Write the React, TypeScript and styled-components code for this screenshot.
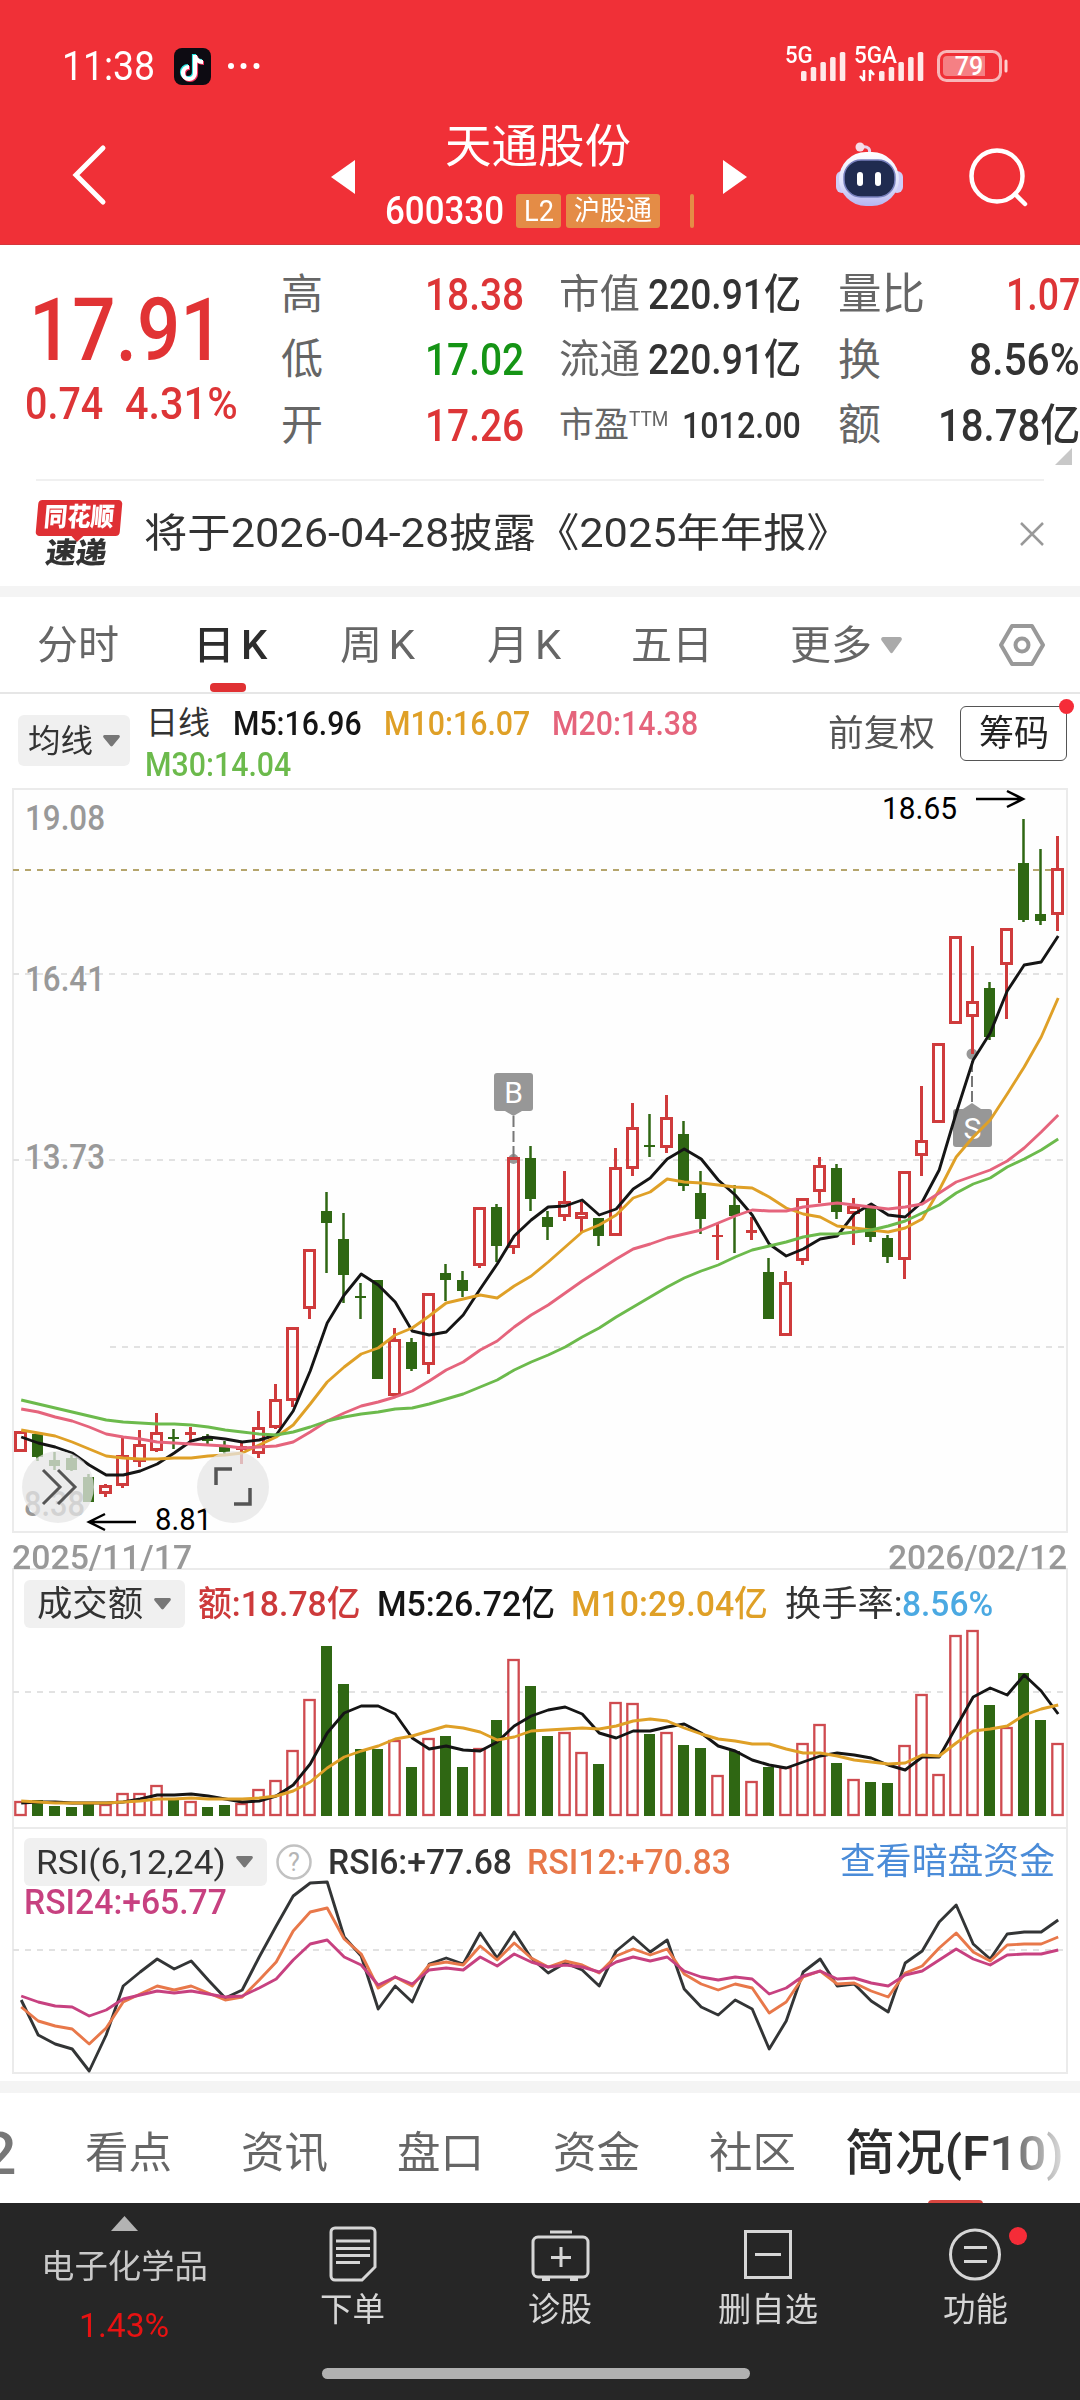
import React, { useLayoutEffect, useRef, useState } from 'react';
import styled, { createGlobalStyle } from 'styled-components';

const GlobalStyle = createGlobalStyle`
  * { box-sizing: border-box; }
  body { margin: 0; background: #fff; font-family: Roboto, "Noto Sans CJK SC", sans-serif; }
`;

/* ---------- text that is condensed to a given width ---------- */

const FitBox = styled.span<{ $w: number; $size: number; $gap: number; $color: string; $weight: number; $up: number }>`
  display: block;
  flex: none;
  width: ${p => p.$w}px;
  height: ${p => p.$size}px;
  margin-left: ${p => p.$gap}px;
  margin-bottom: ${p => p.$up}px;
  font-size: ${p => p.$size}px;
  line-height: ${p => p.$size}px;
  font-weight: ${p => p.$weight};
  color: ${p => p.$color};
  white-space: nowrap;
`;
const FitInner = styled.span`
  display: inline-block;
  transform-origin: 0 50%;
`;

type FitProps = { w: number; size: number; gap?: number; color?: string; weight?: number; up?: number; children: React.ReactNode };
function Fit({ w, size, gap = 0, color = '#333', weight = 400, up = 0, children }: FitProps) {
  const ref = useRef<HTMLSpanElement>(null);
  const [scale, setScale] = useState(1);
  useLayoutEffect(() => {
    if (ref.current) setScale(w / ref.current.offsetWidth);
  }, [w]);
  return (
    <FitBox $w={w} $size={size} $gap={gap} $color={color} $weight={weight} $up={up}>
      <FitInner ref={ref} style={{ transform: `scaleX(${scale})` }}>{children}</FitInner>
    </FitBox>
  );
}

const Screen = styled.div`
  width: 1080px;
  height: 2400px;
  overflow: hidden;
  background: #fff;
`;
const Icon = styled.svg<{ $gap?: number }>`
  display: block;
  flex: none;
  margin-left: ${p => p.$gap ?? 0}px;
  overflow: visible;
`;
const Divider = styled.div<{ $h: number }>`
  height: ${p => p.$h}px;
  background: #f4f4f4;
`;

/* ---------- header ---------- */

const Header = styled.header`
  height: 245px;
  background: #f03037;
  border-bottom: 1px solid #d6363c;
`;
const StatusBar = styled.div`
  display: flex;
  height: 92px;
  padding: 40px 0 0 63px;
  align-items: center;
`;
const TitleBar = styled.div`
  display: flex;
  height: 152px;
  padding-left: 72px;
  padding-top: 14px;
`;
const TitleIcon = styled.div<{ $top: number; $gap: number }>`
  margin: ${p => p.$top}px 0 0 ${p => p.$gap}px;
`;
const TitleBlock = styled.div`
  width: 310px;
  margin: 17px 0 0 29px;
`;
const CodeRow = styled.div`
  display: flex;
  align-items: center;
  height: 34px;
  margin-top: 25px;
`;
const Badge = styled.span<{ $w: number; $gap: number }>`
  display: flex;
  align-items: center;
  justify-content: center;
  flex: none;
  width: ${p => p.$w}px;
  height: 34px;
  margin-left: ${p => p.$gap}px;
  border-radius: 3px;
  background: #e48c46;
`;

const bars = (x: number) => [10, 14, 19, 24, 29].map((h, i) => (
  <rect key={i} x={x + i * 9.7} y={40 - h} width="5.5" height={h} rx="1.5" />
));

function TopHeader() {
  return (
    <Header>
      <StatusBar>
        <Fit gap={-1} w={93} size={41} color="#fff" weight={400}>11:38</Fit>
        <Icon $gap={19} width="37" height="37" viewBox="0 0 37 37">
          <rect width="37" height="37" rx="8" fill="#0d0b12" />
          <g fill="none" strokeWidth="4.2">
            <path d="M20 6v18a6 6 0 1 1-6-6M20 7c1 4 4 6 8 6" stroke="#25e5e0" />
            <path d="M22 8v18a6 6 0 1 1-6-6M22 9c1 4 4 6 8 6" stroke="#f4315c" />
            <path d="M21 7v18a6 6 0 1 1-6-6M21 8c1 4 4 6 8 6" stroke="#fff" />
          </g>
        </Icon>
        <Icon $gap={17} width="34" height="6" viewBox="0 0 34 6" fill="#fff">
          <circle cx="3" cy="3" r="3" /><circle cx="15.500" cy="3" r="3" /><circle cx="28.500" cy="3" r="3" />
        </Icon>
        <Fit gap={523} w={28} size={23} color="#fff" weight={500} up={21}>5G</Fit>
        <Icon $gap={-12} width="46" height="29" viewBox="0 11 46 29" fill="#ffe9e9">{bars(0)}</Icon>
        <Fit gap={7} w={43} size={23} color="#fff" weight={500} up={21}>5GA</Fit>
        <Icon $gap={-38} width="66" height="29" viewBox="0 11 66 29" fill="#ffe9e9">
          {bars(20)}
          <path d="M5 29v11M5 40l-4-5M11 40V29M11 29l4 5" stroke="#fff" strokeWidth="2.500" />
        </Icon>
        <Icon $gap={12} width="72" height="32" viewBox="0 0 72 32">
          <rect x="1.500" y="1.500" width="62" height="29" rx="8" fill="none" stroke="#f8b6b8" strokeWidth="3" />
          <path d="M10 6h38v20H10a4 4 0 0 1-4-4V10a4 4 0 0 1 4-4z" fill="#f58084" />
          <path d="M69 11v10" stroke="#ffd0d0" strokeWidth="3" strokeLinecap="round" />
          <text x="32" y="24.500" textAnchor="middle" fontSize="25" fill="#fff" fontWeight="500">79</text>
        </Icon>
      </StatusBar>
      <TitleBar>
        <TitleIcon $top={39} $gap={0}>
          <Icon width="34" height="60" viewBox="0 0 34 60"><path d="M31 3L4 30l27 27" fill="none" stroke="#fff" strokeWidth="5" strokeLinecap="round" /></Icon>
        </TitleIcon>
        <TitleIcon $top={54} $gap={225}>
          <Icon width="24" height="34" viewBox="0 0 24 34"><path d="M24 0v34L0 17z" fill="#fff" /></Icon>
        </TitleIcon>
        <TitleBlock>
          <Fit gap={61} w={186} size={46} color="#fff">天通股份</Fit>
          <CodeRow>
            <Fit gap={1} w={119} size={39} color="#fff" weight={500}>600330</Fit>
            <Badge $w={45} $gap={12}><Fit w={30} size={29} color="#fff">L2</Fit></Badge>
            <Badge $w={94} $gap={5}><Fit w={78} size={27} color="#fff">沪股通</Fit></Badge>
            <Badge $w={4} $gap={30} />
          </CodeRow>
        </TitleBlock>
        <TitleIcon $top={54} $gap={29}>
          <Icon width="24" height="34" viewBox="0 0 24 34"><path d="M0 0v34l24-17z" fill="#fff" /></Icon>
        </TitleIcon>
        <TitleIcon $top={36} $gap={88}>
          <Icon width="70" height="66" viewBox="0 0 70 66">
            <defs>
              <linearGradient id="shell" x1="0" y1="0" x2="0" y2="1"><stop offset="0" stopColor="#fff" /><stop offset=".6" stopColor="#dfe0fb" /><stop offset="1" stopColor="#b5b5f0" /></linearGradient>
            </defs>
            <path d="M34 12c2-5-1-8-7-7" fill="none" stroke="#e5d3ee" strokeWidth="3" />
            <circle cx="25" cy="5" r="4.500" fill="#f6dce8" />
            <rect x="1" y="29" width="12" height="22" rx="6" fill="#cfcdf7" /><rect x="56" y="29" width="12" height="22" rx="6" fill="#cfcdf7" />
            <rect x="4" y="10" width="60" height="54" rx="27" fill="url(#shell)" />
            <rect x="9" y="18" width="51" height="37" rx="17" fill="#202b50" stroke="#7880bd" strokeWidth="1.500" />
            <rect x="22" y="30" width="6" height="14" rx="3" fill="#fff" /><rect x="40" y="30" width="6" height="14" rx="3" fill="#fff" />
          </Icon>
        </TitleIcon>
        <TitleIcon $top={42} $gap={64}>
          <Icon width="60" height="60" viewBox="0 0 60 60" fill="none" stroke="#fff" strokeWidth="4.500">
            <circle cx="28" cy="28" r="25.500" /><path d="M46 46l10 10" strokeLinecap="round" />
          </Icon>
        </TitleIcon>
      </TitleBar>
    </Header>
  );
}

/* ---------- quote ---------- */

const Quote = styled.section`
  display: flex;
  height: 234px;
`;
const PriceBlock = styled.div`
  width: 281px;
  padding: 41px 0 0 25px;
`;
const ChangeRow = styled.div`
  display: flex;
  margin-top: 8px;
`;
const QuoteColumn = styled.div<{ $w: number; $gap: number }>`
  width: ${p => p.$w}px;
  margin-left: ${p => p.$gap}px;
  padding-top: 17px;
`;
const QuoteRow = styled.div`
  display: flex;
  align-items: center;
  justify-content: space-between;
  height: 65.5px;
`;
const Label = styled.div`
  display: flex;
  align-items: center;
`;
const Corner = styled.div`
  width: 0;
  margin: -11px 8px 0 auto;
  border-left: 17px solid transparent;
  border-bottom: 17px solid #c8c8c8;
`;
const Red = '#dd3537';
const Grey = '#666';

function QuotePanel() {
  return (
    <Quote>
      <PriceBlock>
        <Fit gap={4} w={195} size={88} color="#e13334" weight={500}>17.91</Fit>
        <ChangeRow>
          <Fit w={78} size={44} color={Red} weight={500}>0.74</Fit>
          <Fit gap={22} w={113} size={44} color={Red} weight={500}>4.31%</Fit>
        </ChangeRow>
      </PriceBlock>
      <QuoteColumn $w={243} $gap={0}>
        <QuoteRow><Fit w={42} size={42} color={Grey}>高</Fit><Fit w={99} size={44} color={Red} weight={500}>18.38</Fit></QuoteRow>
        <QuoteRow><Fit w={42} size={42} color={Grey}>低</Fit><Fit w={99} size={44} color="#159415" weight={500}>17.02</Fit></QuoteRow>
        <QuoteRow><Fit w={42} size={42} color={Grey}>开</Fit><Fit w={99} size={44} color={Red} weight={500}>17.26</Fit></QuoteRow>
      </QuoteColumn>
      <QuoteColumn $w={242} $gap={35}>
        <QuoteRow><Fit w={81} size={40} color={Grey}>市值</Fit><Fit w={153} size={42} weight={500}>220.91亿</Fit></QuoteRow>
        <QuoteRow><Fit w={81} size={40} color={Grey}>流通</Fit><Fit w={153} size={42} weight={500}>220.91亿</Fit></QuoteRow>
        <QuoteRow>
          <Label><Fit w={70} size={35} color={Grey}>市盈</Fit><Fit w={39} size={20} color={Grey} up={14}>TTM</Fit></Label>
          <Fit w={119} size={36} weight={500}>1012.00</Fit>
        </QuoteRow>
      </QuoteColumn>
      <QuoteColumn $w={242} $gap={37}>
        <QuoteRow><Fit w={87} size={43} color={Grey}>量比</Fit><Fit w={74} size={44} color={Red} weight={500}>1.07</Fit></QuoteRow>
        <QuoteRow><Fit w={43} size={43} color={Grey}>换</Fit><Fit w={111} size={44} weight={500}>8.56%</Fit></QuoteRow>
        <QuoteRow><Fit w={43} size={43} color={Grey}>额</Fit><Fit w={142} size={44} weight={500}>18.78亿</Fit></QuoteRow>
        <Corner />
      </QuoteColumn>
    </Quote>
  );
}

const Notice = styled.section`
  display: flex;
  align-items: center;
  height: 107px;
  margin: 0 36px;
  border-top: 2px solid #f0f0f0;
`;
const Logo = styled.div`
  width: 84px;
  height: 68px;
  margin-left: 1px;
`;
const LogoTop = styled.div`
  position: relative;
  display: flex;
  justify-content: center;
  height: 36px;
  padding-top: 4px;
  border-radius: 4px;
  background: #df3034;
  transform: skewX(-5deg);
  &::after {
    content: '';
    position: absolute;
    left: 36px;
    top: 36px;
    border: 6px solid transparent;
    border-top-color: #df3034;
    border-bottom: 0;
  }
`;
const LogoBottom = styled.div`
  padding: 3px 0 0 9px;
  transform: skewX(-8deg);
`;
const NoticeText = styled.div`
  flex: 1;
`;

/* ---------- period tabs and legend ---------- */

const Periods = styled.nav`
  display: flex;
  height: 97px;
  padding-left: 37px;
  border-bottom: 2px solid #e6e6e6;
`;
const Period = styled.div<{ $gap: number }>`
  display: flex;
  flex-direction: column;
  align-items: center;
  justify-content: space-between;
  margin-left: ${p => p.$gap}px;
  padding-top: 29px;
`;
const Kay = styled.span`
  margin-left: 6px;
`;
const ActiveMark = styled.i`
  width: 36px;
  height: 9px;
  margin-right: 4px;
  border-radius: 4px;
  background: #e03133;
`;
const PeriodIcon = styled.div<{ $gap: number; $top: number }>`
  margin: ${p => p.$top}px 0 0 ${p => p.$gap}px;
`;
const Down = ({ w = 17, h = 12, color = '#777' }: { w?: number; h?: number; color?: string }) => (
  <Icon width={w} height={h} viewBox="0 0 17 12" preserveAspectRatio="none"><path d="M1.500 0h14a1.500 1.500 0 0 1 1 2.500L9.500 11a1.500 1.500 0 0 1-2 0L.500 2.500A1.500 1.500 0 0 1 1.500 0z" fill={color} /></Icon>
);

const Legend = styled.section`
  display: flex;
  height: 94px;
  padding: 12px 13px 0 18px;
`;
const Dropdown = styled.div<{ $w: number; $h: number; $pad: number }>`
  display: flex;
  align-items: center;
  justify-content: space-between;
  flex: none;
  width: ${p => p.$w}px;
  height: ${p => p.$h}px;
  padding: 0 ${p => p.$pad}px;
  border-radius: 6px;
  background: #f0f0f0;
`;
const MaDropdown = styled(Dropdown)`
  margin-top: 9px;
`;
const MaLines = styled.div`
  width: 570px;
  margin-left: 15px;
`;
const MaRow = styled.div`
  display: flex;
  align-items: center;
  height: 34px;
  margin-bottom: 7px;
`;
const Adjust = styled.div`
  margin: 10px 0 0 97px;
`;
const ChipButton = styled.button`
  position: relative;
  display: flex;
  align-items: center;
  justify-content: center;
  width: 107px;
  height: 55px;
  margin-left: auto;
  padding: 0;
  border: 1.5px solid #555;
  border-radius: 6px;
  background: #fff;
  font-family: inherit;
`;
const Dot = styled.i<{ $size: number; $top: number; $right: number }>`
  position: absolute;
  top: ${p => p.$top}px;
  right: ${p => p.$right}px;
  width: ${p => p.$size}px;
  height: ${p => p.$size}px;
  border-radius: 50%;
  background: #f52c38;
`;

/* ---------- chart data ---------- */

type Candle = [up: number, high: number, top: number, bottom: number, low: number, volume: number];
const candles: Candle[] = [
  [1,1431,1431,1452,1452,1802],[0,1434,1434,1457,1461,1800],[0,1452,1460,1466,1470,1806],[0,1455,1458,1470,1471,1807],
  [0,1474,1477,1502,1502,1804],[1,1484,1485,1494,1497,1805],[1,1438,1455,1486,1488,1794],[1,1430,1444,1462,1467,1794],
  [1,1413,1432,1451,1452,1786],[0,1429,1437,1439,1449,1800],[1,1427,1432,1435,1441,1802],[0,1434,1436,1441,1445,1807],
  [0,1441,1445,1452,1455,1805],[1,1442,1446,1450,1464,1804],[1,1411,1427,1454,1458,1790],[1,1384,1399,1428,1429,1781],
  [1,1327,1327,1401,1407,1751],[1,1249,1249,1309,1319,1700],[0,1192,1211,1223,1273,1646],[0,1213,1239,1275,1303,1684],
  [0,1283,1296,1298,1319,1749],[0,1280,1280,1379,1379,1749],[1,1328,1339,1396,1396,1741],[0,1338,1342,1369,1371,1767],
  [1,1293,1293,1365,1374,1739],[0,1264,1273,1280,1301,1736],[0,1271,1280,1291,1297,1767],[1,1207,1207,1266,1268,1749],
  [0,1204,1207,1246,1262,1720],[1,1157,1157,1248,1254,1660],[0,1146,1158,1199,1211,1686],[0,1211,1217,1227,1240,1736],
  [1,1171,1201,1217,1221,1733],[1,1202,1212,1219,1232,1753],[0,1218,1218,1236,1246,1764],[1,1148,1167,1236,1236,1703],
  [1,1103,1127,1169,1176,1704],[0,1114,1145,1147,1157,1734],[1,1095,1117,1148,1153,1733],[0,1121,1134,1186,1191,1745],
  [0,1171,1193,1219,1234,1748],[1,1223,1235,1237,1260,1776],[0,1185,1205,1216,1253,1751],[1,1217,1230,1233,1240,1782],
  [0,1258,1272,1319,1319,1767],[1,1271,1282,1336,1336,1768],[1,1198,1198,1261,1265,1744],[1,1157,1165,1192,1203,1725],
  [0,1164,1168,1212,1219,1763],[1,1198,1206,1214,1245,1780],[0,1206,1208,1237,1242,1782],[0,1235,1238,1257,1263,1783],
  [1,1171,1171,1260,1279,1746],[1,1086,1140,1156,1176,1695],[1,1043,1043,1123,1123,1775],[1,936,936,1024,1024,1636],
  [1,946,1001,1017,1054,1631],[0,982,988,1037,1040,1705],[1,928,928,965,1019,1728],[0,819,863,920,922,1673],
  [0,849,914,921,925,1720],[1,836,868,915,931,1744],
];
const ma5 = [1437,1443,1447,1453,1465,1475,1475,1471,1464,1453,1441,1437,1439,1442,1440,1435,1411,1371,1323,1295,1274,1285,1302,1331,1335,1332,1315,1289,1264,1236,1220,1207,1206,1200,1215,1209,1189,1178,1159,1149,1159,1180,1195,1215,1244,1256,1249,1239,1236,1214,1204,1215,1217,1202,1170,1113,1060,1033,991,965,962,936];
const ma10 = [1430,1433,1436,1442,1449,1456,1458,1459,1459,1458,1458,1456,1455,1453,1445,1437,1425,1404,1382,1367,1354,1348,1335,1328,1316,1303,1299,1295,1298,1286,1276,1262,1247,1232,1225,1215,1198,1192,1179,1182,1183,1185,1187,1188,1197,1208,1214,1217,1226,1228,1230,1232,1228,1219,1190,1157,1137,1120,1094,1067,1037,998];
const ma20 = [1409,1412,1417,1421,1427,1434,1437,1439,1442,1443,1444,1445,1446,1448,1447,1446,1442,1432,1421,1413,1406,1402,1397,1391,1381,1370,1362,1350,1341,1327,1315,1305,1293,1281,1270,1259,1249,1244,1238,1234,1230,1223,1216,1210,1211,1211,1207,1205,1203,1205,1207,1209,1207,1204,1193,1182,1176,1170,1161,1148,1132,1115];
const ma30 = [1400,1404,1408,1412,1416,1420,1422,1423,1424,1424,1425,1427,1430,1432,1434,1435,1432,1427,1421,1417,1414,1412,1409,1408,1404,1399,1394,1387,1380,1370,1362,1355,1347,1337,1328,1317,1307,1297,1287,1278,1271,1265,1257,1250,1246,1242,1237,1234,1234,1232,1230,1226,1221,1213,1205,1193,1184,1178,1167,1159,1150,1139];
const vol5 = [1803,1802,1802,1803,1803,1803,1802,1799,1795,1795,1794,1796,1799,1802,1801,1796,1785,1764,1733,1713,1706,1706,1714,1738,1749,1746,1750,1751,1742,1726,1716,1710,1707,1714,1733,1738,1731,1731,1727,1724,1733,1746,1751,1760,1765,1768,1762,1756,1753,1755,1758,1765,1770,1757,1757,1727,1697,1688,1695,1675,1691,1714];
const vol10 = [1801,1802,1803,1803,1803,1803,1802,1801,1799,1799,1798,1799,1799,1799,1798,1796,1791,1782,1768,1757,1751,1746,1739,1736,1731,1726,1728,1732,1740,1737,1731,1730,1729,1728,1729,1726,1721,1719,1721,1728,1734,1739,1741,1744,1744,1749,1753,1753,1756,1760,1762,1764,1763,1755,1756,1743,1731,1729,1726,1715,1709,1705];
const rsi6 = [2000,2035,2044,2049,2071,2035,1986,1972,1959,1969,1961,1980,1998,1990,1957,1926,1896,1883,1882,1937,1956,2009,1986,2002,1964,1958,1964,1933,1958,1932,1958,1973,1963,1970,1986,1951,1937,1952,1940,1989,2007,2015,2000,2009,2049,2021,1972,1959,1986,1984,2001,2012,1963,1951,1922,1905,1944,1959,1934,1932,1932,1920];
const rsi12 = [2007,2021,2026,2029,2044,2028,2002,1994,1986,1990,1986,1993,2000,1997,1980,1962,1931,1912,1908,1939,1954,1988,1977,1986,1965,1962,1965,1946,1960,1943,1958,1967,1961,1965,1973,1956,1949,1955,1949,1974,1984,1990,1984,1988,2013,2002,1977,1971,1984,1983,1991,1997,1973,1966,1948,1933,1952,1961,1945,1944,1944,1937];
const rsi24 = [1996,2002,2006,2007,2016,2010,1999,1995,1991,1993,1991,1994,1997,1996,1988,1979,1960,1944,1940,1957,1965,1985,1977,1984,1970,1968,1970,1957,1966,1954,1962,1967,1965,1967,1972,1962,1957,1961,1957,1971,1977,1980,1977,1979,1994,1988,1976,1971,1979,1978,1983,1986,1975,1971,1960,1949,1959,1965,1955,1954,1954,1950];

const cx = (i: number) => 20.5 + i * 17;
const UP = '#cf3b3c';
const DOWN = '#2f6713';

const Line = ({ data, color }: { data: number[]; color: string }) => (
  <polyline fill="none" stroke={color} strokeWidth="2.900" strokeLinejoin="round" points={data.map((y, i) => `${cx(i) + 0.7},${y}`).join(' ')} />
);
const Dash = ({ y, x = 13, color = '#e2e2e2' }: { y: number; x?: number; color?: string }) => (
  <path d={`M${x} ${y}H1066`} stroke={color} strokeWidth="2" strokeDasharray="6 6" />
);
const AxisText = ({ x, y, w, children }: { x: number; y: number; w: number; children: string }) => (
  <text x={x} y={y} fontSize="35" fontWeight="500" fill="#999" textLength={w} lengthAdjust="spacingAndGlyphs">{children}</text>
);

const Panel = styled.section<{ $h: number }>`
  position: relative;
  height: ${p => p.$h}px;
`;
const Plot = styled.svg`
  position: absolute;
  left: 0;
  top: 0;
  display: block;
`;
const PanelHead = styled.div<{ $top: number }>`
  position: relative;
  display: flex;
  align-items: center;
  padding: ${p => p.$top}px 0 0 24px;
`;
const RoundButton = styled.button<{ $x: number }>`
  position: absolute;
  left: ${p => p.$x}px;
  top: 663px;
  width: 72px;
  height: 72px;
  padding: 0;
  border: 0;
  border-radius: 50%;
  background: rgba(230, 230, 230, 0.75);
`;
const Dates = styled.div`
  position: relative;
  z-index: 1;
  display: flex;
  justify-content: space-between;
  height: 35px;
  padding: 7px 13px 0 12px;
`;

function PricePanel() {
  return (
    <Panel $h={745}>
      <Plot width="1080" height="745" viewBox="0 788 1080 745">
        <rect x="13" y="789" width="1054" height="743" fill="#fefefe" stroke="#ebebeb" strokeWidth="2" />
        <Dash y={974} /><Dash y={1160} /><Dash y={1347} x={110} /><Dash y={870} color="#b5a56c" />
        <AxisText x={25} y={830} w={80}>19.08</AxisText>
        <AxisText x={25} y={991} w={80}>16.41</AxisText>
        <AxisText x={25} y={1169} w={80}>13.73</AxisText>
        <AxisText x={24} y={1516} w={61}>8.38</AxisText>
        <g fill="#979797">
          <rect x="494" y="1073" width="39" height="38" rx="3" /><path d="M505 1111h17l-8.500 5z" />
          <rect x="953" y="1109" width="39" height="38" rx="3" /><path d="M963 1109h18l-9-6z" />
          <circle cx="513.500" cy="1159" r="5" /><circle cx="972" cy="1054" r="5.500" />
        </g>
        <path d="M513.500 1116v42M972 1061v43" stroke="#777" strokeWidth="2" strokeDasharray="11 4" />
        <text x="513.500" y="1103" fontSize="30" fill="#fff" textAnchor="middle">B</text>
        <text x="972.500" y="1139" fontSize="30" fill="#fff" textAnchor="middle">S</text>
        {candles.map(([up, hi, top, bot, lo], i) => {
          const x = cx(i);
          if (!up) return (
            <g key={i} fill={DOWN}>
              <rect x={x - 1.25} y={hi} width="2.500" height={lo - hi} />
              <rect x={x - 5.5} y={top} width="11" height={bot - top} />
            </g>
          );
          return (
            <g key={i} fill={UP}>
              <rect x={x - 1.5} y={hi} width="3" height={top - hi} />
              <rect x={x - 1.5} y={bot} width="3" height={lo - bot} />
              {bot - top < 5
                ? <rect x={x - 5.5} y={top} width="11" height={bot - top} />
                : <rect x={x - 5} y={top + 1.5} width="10" height={bot - top - 3} fill="none" stroke={UP} strokeWidth="3" />}
            </g>
          );
        })}
        <Line data={ma5} color="#151515" />
        <Line data={ma10} color="#dfa027" />
        <Line data={ma20} color="#e5647c" />
        <Line data={ma30} color="#6cba4c" />
        <text x="882" y="819" fontSize="31" textLength="75" lengthAdjust="spacingAndGlyphs">18.65</text>
        <text x="155" y="1530" fontSize="31" textLength="57" lengthAdjust="spacingAndGlyphs">8.81</text>
        <path d="M976 799h46M1007 791l16 8-16 8M136 1522H90M105 1514l-16 8 16 8" fill="none" stroke="#000" strokeWidth="2.500" />
      </Plot>
      <RoundButton $x={22}>
        <Icon width="72" height="72" viewBox="0 0 72 72" fill="none" stroke="#555" strokeWidth="3">
          <path d="M21 19l17 17-17 17M36 19l17 17-17 17" />
        </Icon>
      </RoundButton>
      <RoundButton $x={197}>
        <Icon width="72" height="72" viewBox="0 0 72 72" fill="none" stroke="#555" strokeWidth="3.500">
          <path d="M35 18H19v16M53 37v16H37" />
        </Icon>
      </RoundButton>
    </Panel>
  );
}

function VolumePanel() {
  return (
    <Panel $h={259}>
      <Plot width="1080" height="259" viewBox="0 1568 1080 259">
        <path d="M13 1828V1569H1067V1828" fill="none" stroke="#ebebeb" strokeWidth="2" />
        <Dash y={1692} />
        {candles.map(([up, , , , , v], i) => up
          ? <rect key={i} x={cx(i) - 5.2} y={v} width="10.400" height={1815 - v} fill="#fff" stroke="#cf4b50" strokeWidth="2.300" />
          : <rect key={i} x={cx(i) - 5.5} y={v} width="11" height={1816 - v} fill={DOWN} />)}
        <Line data={vol5} color="#151515" />
        <Line data={vol10} color="#dfa027" />
      </Plot>
      <PanelHead $top={12}>
        <Dropdown $w={161} $h={48} $pad={14}><Fit gap={-1} w={106} size={35}>成交额</Fit><Down /></Dropdown>
        <Fit gap={13} w={163} size={35} color="#cd3a3b" weight={500}>额:18.78亿</Fit>
        <Fit gap={16} w={178} size={35} color="#151515" weight={500}>M5:26.72亿</Fit>
        <Fit gap={16} w={197} size={35} color="#dfa027" weight={500}>M10:29.04亿</Fit>
        <Fit gap={17} w={117} size={35}>换手率:</Fit>
        <Fit gap={0} w={91} size={35} color="#4ba9e2" weight={500}>8.56%</Fit>
      </PanelHead>
    </Panel>
  );
}

const RsiSecond = styled.div`
  position: absolute;
  left: 24px;
  top: 58px;
`;

function RsiPanel() {
  return (
    <Panel $h={254}>
      <Plot width="1080" height="247" viewBox="0 1827 1080 247">
        <rect x="13" y="1828" width="1054" height="245" fill="none" stroke="#ebebeb" strokeWidth="2" />
        <Dash y={1950} />
        <Line data={rsi6} color="#333536" />
        <Line data={rsi12} color="#e8784a" />
        <Line data={rsi24} color="#c74180" />
      </Plot>
      <PanelHead $top={11}>
        <Dropdown $w={243} $h={48} $pad={14}><Fit gap={-2} w={190} size={34}>RSI(6,12,24)</Fit><Down /></Dropdown>
        <Icon $gap={9} width="36" height="36" viewBox="0 0 36 36">
          <circle cx="18" cy="18" r="16.500" fill="#fff" stroke="#c2c2c2" strokeWidth="2.500" />
          <text x="18" y="27" textAnchor="middle" fontSize="25" fill="#b5b5b5">?</text>
        </Icon>
        <Fit gap={16} w={184} size={35} weight={500}>RSI6:+77.68</Fit>
        <Fit gap={15} w={204} size={35} color="#e8784a" weight={500}>RSI12:+70.83</Fit>
        <Fit gap={109} w={215} size={36} color="#4b8cd8">查看暗盘资金</Fit>
      </PanelHead>
      <RsiSecond><Fit w={203} size={35} color="#c74180" weight={500}>RSI24:+65.77</Fit></RsiSecond>
    </Panel>
  );
}

/* ---------- bottom ---------- */

const InfoTabs = styled.nav`
  position: relative;
  display: flex;
  align-items: center;
  height: 110px;
  padding-bottom: 0;
  padding-top: 10px;
  overflow: hidden;
`;
const CurrentTab = styled.div`
  position: relative;
  margin-left: 49px;
  -webkit-mask-image: linear-gradient(90deg, #000 65%, rgba(0, 0, 0, 0.15) 100%);
  mask-image: linear-gradient(90deg, #000 65%, rgba(0, 0, 0, 0.15) 100%);
  padding: 14px 0;
`;
const Underline = styled.i`
  position: absolute;
  right: 97px;
  bottom: -6px;
  width: 55px;
  height: 9px;
  border-radius: 4px;
  background: #d94640;
`;
const BottomNav = styled.footer`
  display: flex;
  flex-direction: column;
  align-items: center;
  height: 197px;
  background: #262626;
`;
const NavRow = styled.div`
  display: flex;
  width: 100%;
  height: 165px;
`;
const Sector = styled.div`
  display: flex;
  flex-direction: column;
  align-items: center;
  width: 248px;
  margin-right: 1px;
  padding-top: 13px;
  gap: 19px;
`;
const SectorRate = styled.div`
  margin-top: 6px;
`;
const NavItem = styled.div`
  position: relative;
  display: flex;
  flex-direction: column;
  align-items: center;
  width: 207.5px;
  padding-top: 23px;
  gap: 11px;
`;
const HomeBar = styled.i`
  width: 428px;
  height: 11px;
  margin-right: 8px;
  border-radius: 6px;
  background: #b1b1b1;
`;

const navIcons = [
  { label: '下单', w: 65, path: <><path d="M9 2h36a4 4 0 0 1 4 4v35l-13 13H9a4 4 0 0 1-4-4V6a4 4 0 0 1 4-4z" /><path d="M10 15h34M10 22.500h34M10 29.500h34M10 36.500h24" /></> },
  { label: '诊股', w: 64, path: <><rect x="0" y="11" width="55" height="40" rx="5" /><path d="M17 6h22M28 21v20M18 31.500h20" /><path d="M9 53h8M37 53h8" strokeWidth="4" /></> },
  { label: '删自选', w: 100, path: <><rect x="4.500" y="5.500" width="45" height="46" /><path d="M14 28.500h26" /></> },
  { label: '功能', w: 65, path: <><circle cx="27" cy="28.500" r="24.500" /><path d="M16 21.500h23M16 35.500h23" /></> },
];

export default function App() {
  return (
    <Screen>
      <GlobalStyle />
      <TopHeader />
      <QuotePanel />
      <Notice>
        <Logo>
          <LogoTop><Fit w={70} size={26} color="#fff" weight={900}>同花顺</Fit></LogoTop>
          <LogoBottom><Fit w={61} size={29} weight={900}>速递</Fit></LogoBottom>
        </Logo>
        <NoticeText><Fit gap={23} w={706} size={40}>将于2026-04-28披露《2025年年报》</Fit></NoticeText>
        <Icon width="24" height="24" viewBox="0 0 24 24"><path d="M1 1l22 22M23 1L1 23" stroke="#999" strokeWidth="2.500" /></Icon>
      </Notice>
      <Divider $h={11} />
      <Periods>
        <Period $gap={0}><Fit w={82} size={40} color={Grey}>分时</Fit></Period>
        <Period $gap={74}><Fit w={74} size={40} color="#2d2d2d" weight={500}>日<Kay>K</Kay></Fit><ActiveMark /></Period>
        <Period $gap={73}><Fit w={75} size={40} color={Grey}>周<Kay>K</Kay></Fit></Period>
        <Period $gap={72}><Fit w={74} size={40} color={Grey}>月<Kay>K</Kay></Fit></Period>
        <Period $gap={70}><Fit w={82} size={40} color={Grey}>五日</Fit></Period>
        <Period $gap={77}><Fit w={82} size={40} color={Grey}>更多</Fit></Period>
        <PeriodIcon $gap={9} $top={40}><Down w={21} h={17} color="#aaa" /></PeriodIcon>
        <PeriodIcon $gap={97} $top={26}>
          <Icon width="46" height="44" viewBox="0 0 46 44" fill="none" stroke="#999" strokeWidth="4" strokeLinejoin="round">
            <path d="M13 3h20l11 19-11 19H13L2 22z" /><circle cx="23" cy="22" r="6.500" />
          </Icon>
        </PeriodIcon>
      </Periods>
      <Legend>
        <MaDropdown $w={112} $h={51} $pad={10}><Fit w={65} size={32}>均线</Fit><Down /></MaDropdown>
        <MaLines>
          <MaRow>
            <Fit gap={1} w={64} size={32}>日线</Fit>
            <Fit gap={23} w={129} size={33} color="#151515" weight={500}>M5:16.96</Fit>
            <Fit gap={22} w={146} size={33} color="#dfa027" weight={500}>M10:16.07</Fit>
            <Fit gap={22} w={146} size={33} color="#e5647c" weight={500}>M20:14.38</Fit>
          </MaRow>
          <MaRow><Fit w={146} size={33} color="#6cba4c" weight={500}>M30:14.04</Fit></MaRow>
        </MaLines>
        <Adjust><Fit gap={16} w={107} size={36} color="#555">前复权</Fit></Adjust>
        <ChipButton><Fit w={70} size={36} color="#222">筹码</Fit><Dot $size={15} $top={-8} $right={-8} /></ChipButton>
      </Legend>
      <PricePanel />
      <Dates>
        <Fit w={180} size={34} color="#999" weight={500}>2025/11/17</Fit>
        <Fit w={179} size={34} color="#999" weight={500}>2026/02/12</Fit>
      </Dates>
      <VolumePanel />
      <RsiPanel />
      <Divider $h={12} />
      <InfoTabs>
        <Fit gap={-18} w={35} size={59} color="#777" weight={500}>2</Fit>
        <Fit gap={68} w={87} size={43} color={Grey}>看点</Fit>
        <Fit gap={69} w={87} size={43} color={Grey}>资讯</Fit>
        <Fit gap={69} w={87} size={43} color={Grey}>盘口</Fit>
        <Fit gap={69} w={87} size={43} color={Grey}>资金</Fit>
        <Fit gap={69} w={87} size={43} color={Grey}>社区</Fit>
        <CurrentTab><Fit w={219} size={49} weight={500} color="#2d2d2d">简况(F10)</Fit></CurrentTab>
        <Underline />
      </InfoTabs>
      <BottomNav>
        <NavRow>
          <Sector>
            <Icon width="27" height="15" viewBox="0 0 27 15"><path d="M13.500 0L27 15H0z" fill="#b3b3b3" /></Icon>
            <Fit w={167} size={33} color="#c9c9c9">电子化学品</Fit>
            <SectorRate><Fit w={90} size={34} color="#e81212">1.43%</Fit></SectorRate>
          </Sector>
          {navIcons.map(n => (
            <NavItem key={n.label}>
              <Icon width="54" height="56" viewBox="0 0 54 56" fill="none" stroke="#d6d6d6" strokeWidth="3">{n.path}</Icon>
              <Fit w={n.w} size={33} color="#d6d6d6">{n.label}</Fit>
              {n.label === '功能' && <Dot $size={18} $top={24} $right={52} />}
            </NavItem>
          ))}
        </NavRow>
        <HomeBar />
      </BottomNav>
    </Screen>
  );
}
